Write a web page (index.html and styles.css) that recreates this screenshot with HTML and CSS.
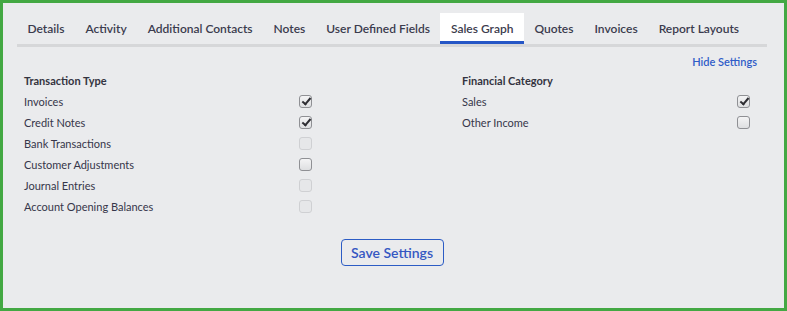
FILE: index.html
```html
<!DOCTYPE html>
<html lang="en">
<head>
    <meta charset="UTF-8">
    <title>Sales Graph</title>
    <link rel="stylesheet" href="styles.css">
</head>
<body>
    <div class="frame">
        <div class="tabs">
            <div class="tab">Details</div>
            <div class="tab">Activity</div>
            <div class="tab">Additional Contacts</div>
            <div class="tab">Notes</div>
            <div class="tab">User Defined Fields</div>
            <div class="tab active">Sales Graph</div>
            <div class="tab">Quotes</div>
            <div class="tab">Invoices</div>
            <div class="tab">Report Layouts</div>
        </div>
        <div class="hide-row"><a class="hide-link">Hide Settings</a></div>
        <div class="settings">
            <div class="group">
                <div class="group-title">Transaction Type</div>
                <div class="opt"><span>Invoices</span><span class="box checked"></span></div>
                <div class="opt"><span>Credit Notes</span><span class="box checked"></span></div>
                <div class="opt"><span>Bank Transactions</span><span class="box disabled"></span></div>
                <div class="opt"><span>Customer Adjustments</span><span class="box"></span></div>
                <div class="opt"><span>Journal Entries</span><span class="box disabled"></span></div>
                <div class="opt"><span>Account Opening Balances</span><span class="box disabled"></span></div>
            </div>
            <div class="group">
                <div class="group-title">Financial Category</div>
                <div class="opt"><span>Sales</span><span class="box checked"></span></div>
                <div class="opt"><span>Other Income</span><span class="box"></span></div>
            </div>
        </div>
        <div class="actions">
            <button class="save-btn">Save Settings</button>
        </div>
    </div>
</body>
</html>
```

FILE: styles.css
```css
body {
    margin: 0;
    font-family: Lato, "Liberation Sans", sans-serif;
}
.frame {
    width: 787px;
    height: 311px;
    box-sizing: border-box;
    border: 3px solid #43a843;
    background-color: #eaebed;
    padding: 10px 17px 0 14px;
}
.tabs {
    display: flex;
    border-bottom: 3px solid #d6d7d9;
    height: 31px;
}
.tab {
    flex-shrink: 0;
    white-space: nowrap;
    padding: 0 10.5px;
    line-height: 31px;
    font-size: 12px;
    font-weight: 600;
    color: #3b3b4d;
}
.tab.active {
    background-color: #ffffff;
    border-bottom: 3px solid #2556c6;
}
.hide-row {
    text-align: right;
    padding-right: 10px;
    margin-top: 5px;
    line-height: 16px;
}
.hide-link {
    font-size: 11px;
    font-weight: 600;
    color: #2f5cc8;
}
.settings {
    display: flex;
    padding-left: 7px;
    gap: 150px;
}
.group {
    width: 288px;
}
.group-title {
    font-size: 11px;
    font-weight: 700;
    color: #333340;
    line-height: 21px;
}
.opt {
    display: flex;
    justify-content: space-between;
    align-items: center;
    height: 21px;
    font-size: 11px;
    color: #36364a;
}
.box {
    width: 11px;
    height: 11px;
    border: 1px solid #8f9094;
    border-radius: 3px;
    background: linear-gradient(#f4f4f5, #dedfe1);
    position: relative;
}
.box.disabled {
    border-color: #cfd0d3;
    background: #e6e7e9;
}
.box.checked::after {
    content: "";
    position: absolute;
    left: 4px;
    top: 0px;
    width: 3px;
    height: 7px;
    border: solid #2e2e33;
    border-width: 0 2px 2px 0;
    transform: rotate(40deg);
}
.actions {
    display: flex;
    justify-content: center;
    margin-top: 22px;
}
.save-btn {
    width: 103px;
    height: 27px;
    border: 1px solid #2c5cc5;
    border-radius: 4px;
    background: transparent;
    font-family: Lato, "Liberation Sans", sans-serif;
    font-size: 14px;
    font-weight: 600;
    color: #3557c2;
    padding: 0;
}
```
